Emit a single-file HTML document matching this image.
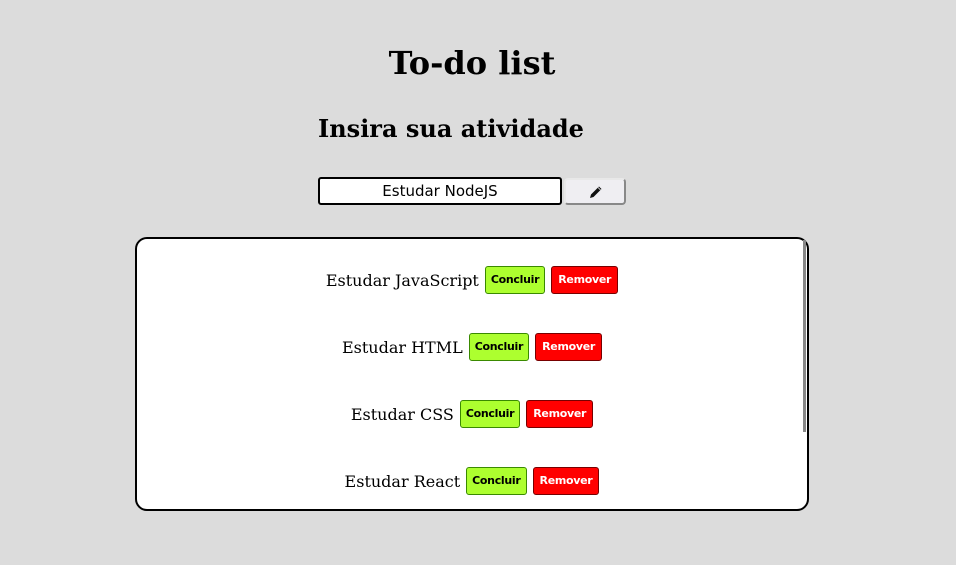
<!DOCTYPE html>
<html><head><meta charset="utf-8">
<style>
*{margin:0;padding:0;box-sizing:border-box}
body{width:956px;height:565px;background:#dcdcdc;position:relative;overflow:hidden;font-family:"DejaVu Serif",serif}
h1{position:absolute;top:44px;left:0;width:944px;text-align:center;font-size:32px;font-weight:bold}
h2{position:absolute;top:114px;left:318px;font-size:24px;font-weight:bold}
.inp{position:absolute;left:318px;top:177px;width:244px;height:28px;background:#fff;border:2px solid #000;border-radius:3px;font-family:"DejaVu Sans",sans-serif;font-size:15px;text-align:center;line-height:24px}
.btn{position:absolute;left:564px;top:178px;width:62px;height:27px;background:#efeef2;border:2px solid #888;border-top-color:#e8e8e8;border-left-color:#e8e8e8;border-radius:4px}
.btn svg{position:absolute;left:22px;top:4px}
.box{position:absolute;left:135px;top:237px;width:674px;height:274px;background:#fff;border:2px solid #000;border-radius:12px}
.sb{position:absolute;left:803px;top:240px;width:3px;height:192px;background:#888}
.row{position:absolute;left:136px;width:672px;text-align:center;height:30px;white-space:nowrap;font-size:0}
.row span{font-size:16px;vertical-align:middle;margin-right:6px}
.c,.r{display:inline-block;vertical-align:middle;height:28px;line-height:26px;padding:0 5px;font-family:"DejaVu Sans",sans-serif;font-size:11px;letter-spacing:-0.3px;font-weight:bold;border-radius:3px}
.c{background:#adff2f;border:1px solid #3a8a00;color:#000;margin-right:6px}
.r{background:#f00;border:1px solid #700;color:#fff;padding:0 6px}
</style></head><body>
<h1>To-do list</h1>
<h2>Insira sua atividade</h2>
<div class="inp">Estudar NodeJS</div>
<div class="btn"><svg width="16" height="16" viewBox="0 0 16 16"><path d="M2 14 L3 10.5 L11 2.5 L13.5 5 L5.5 13 Z" fill="#111"/><path d="M10 3.5 L12.5 6" stroke="#efeef2" stroke-width="0.8"/></svg></div>
<div class="box"></div>
<div class="sb"></div>
<div class="row" style="top:266px"><span>Estudar JavaScript</span><b class="c">Concluir</b><b class="r">Remover</b></div>
<div class="row" style="top:333px"><span>Estudar HTML</span><b class="c">Concluir</b><b class="r">Remover</b></div>
<div class="row" style="top:400px"><span>Estudar CSS</span><b class="c">Concluir</b><b class="r">Remover</b></div>
<div class="row" style="top:467px"><span>Estudar React</span><b class="c">Concluir</b><b class="r">Remover</b></div>
</body></html>
